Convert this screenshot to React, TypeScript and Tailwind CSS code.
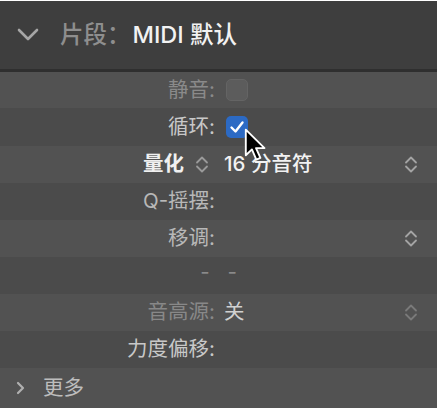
import React from 'react'

// Up/down stepper glyph used by pop-up menus
const Stepper: React.FC<{ className?: string }> = ({ className }) => (
  <svg width="14" height="19" viewBox="0 0 14 19" fill="none" className={className}>
    <path d="M2 7.5 L7 2.5 L12 7.5" stroke="currentColor" strokeWidth="1.8" strokeLinecap="round" strokeLinejoin="round" />
    <path d="M2 11.5 L7 16.5 L12 11.5" stroke="currentColor" strokeWidth="1.8" strokeLinecap="round" strokeLinejoin="round" />
  </svg>
)

interface RowProps {
  label?: React.ReactNode
  labelClass?: string
  children?: React.ReactNode
  stepper?: string
  light?: boolean
  height: string
}

const Row: React.FC<RowProps> = ({ label, labelClass, children, stepper, light, height }) => (
  <div className={`flex items-center ${height} ${light ? 'bg-[#525252]' : 'bg-[#4b4b4b]'}`}>
    <div className={`w-[215px] shrink-0 flex justify-end items-center ${labelClass ?? ''}`}>{label}</div>
    <div className="flex-1 flex items-center pl-[9px]">{children}</div>
    {stepper && <Stepper className={`mr-[19px] ${stepper}`} />}
  </div>
)

const App: React.FC = () => {
  return (
    <div
      className="w-[439px] h-[410px] bg-white pt-[1px]"
      style={{ fontFamily: '"Inter", "Noto Sans CJK SC", sans-serif' }}
    >
      <div className="relative w-[437px] h-[407px] bg-[#4e4e4e] overflow-hidden text-[20.5px] leading-none">
        {/* Header */}
        <div className="h-[68px] bg-[#3e3e3e] flex items-center">
          <svg width="22" height="13" viewBox="0 0 22 13" fill="none" className="ml-[17px] mt-[-2px] text-[#a6a6a6]">
            <path d="M2 2 L11 11 L20 2" stroke="currentColor" strokeWidth="2.6" strokeLinecap="round" strokeLinejoin="round" />
          </svg>
          <div className="ml-[21px] text-[23.5px] font-medium">
            <span className="text-[#8e8e8e]">片段：</span>
            <span className="text-[#f2f2f2] ml-[2px]">MIDI 默认</span>
          </div>
        </div>
        <div className="h-[3px] bg-[#2f2f2f]" />

        {/* Rows */}
        <Row height="h-[36px]" light label="静音:" labelClass="text-[#8a8a8a]">
          <div className="ml-[2px] w-[22px] h-[22px] rounded-[5px] bg-[#5c5c5c] border border-[#646464]" />
        </Row>
        <Row height="h-[38px]" label="循环:" labelClass="text-[#c8c8c8]">
          <div className="ml-[2px] w-[22px] h-[22px] rounded-[5px] bg-[#2c6ac4] flex items-center justify-center">
            <svg width="16" height="14" viewBox="0 0 16 14" fill="none">
              <path d="M2.5 7.5 L6.5 11.5 L13.5 2.5" stroke="white" strokeWidth="2.4" strokeLinecap="round" strokeLinejoin="round" />
            </svg>
          </div>
        </Row>
        <Row
          height="h-[37px]"
          light
          stepper="text-[#a4a4a4]"
          label={
            <>
              <span className="text-[#f0f0f0] font-semibold">量化</span>
              <Stepper className="ml-[11px] mr-[6px] text-[#9a9a9a]" />
            </>
          }
        >
          <span className="text-[#f2f2f2] font-medium">16 分音符</span>
        </Row>
        <Row height="h-[37px]" label="Q-摇摆:" labelClass="text-[#b8b8b8]" />
        <Row height="h-[37px]" light label="移调:" labelClass="text-[#b8b8b8]" stepper="text-[#a4a4a4]" />
        <div className="h-[37px] bg-[#4b4b4b] flex items-center justify-center text-[#8a8a8a] pb-[6px]">
          <span className="tracking-[6px] pl-[6px]">- -</span>
        </div>
        <Row height="h-[37px]" light label="音高源:" labelClass="text-[#888888]" stepper="text-[#7a7a7a]">
          <span className="text-[#d0d0d0]">关</span>
        </Row>
        <Row height="h-[37px]" label="力度偏移:" labelClass="text-[#c8c8c8]" />
        <div className="h-[40px] bg-[#525252] flex items-center">
          <svg width="9" height="14" viewBox="0 0 9 14" fill="none" className="ml-[16px] text-[#b0b0b0]">
            <path d="M2 2 L7 7 L2 12" stroke="currentColor" strokeWidth="2.2" strokeLinecap="round" strokeLinejoin="round" />
          </svg>
          <span className="ml-[18px] text-[#bdbdbd]">更多</span>
        </div>

        {/* Mouse pointer over the checkbox */}
        <svg width="24" height="34" viewBox="0 0 14 20" className="absolute left-[244px] top-[127px]">
          <path
            d="M1 1 L1 16 L4.6 12.6 L7.2 18.6 L9.6 17.6 L7 11.8 L12 11.8 Z"
            fill="black"
            stroke="white"
            strokeWidth="1.1"
            strokeLinejoin="round"
          />
        </svg>
      </div>
    </div>
  )
}

export default App
